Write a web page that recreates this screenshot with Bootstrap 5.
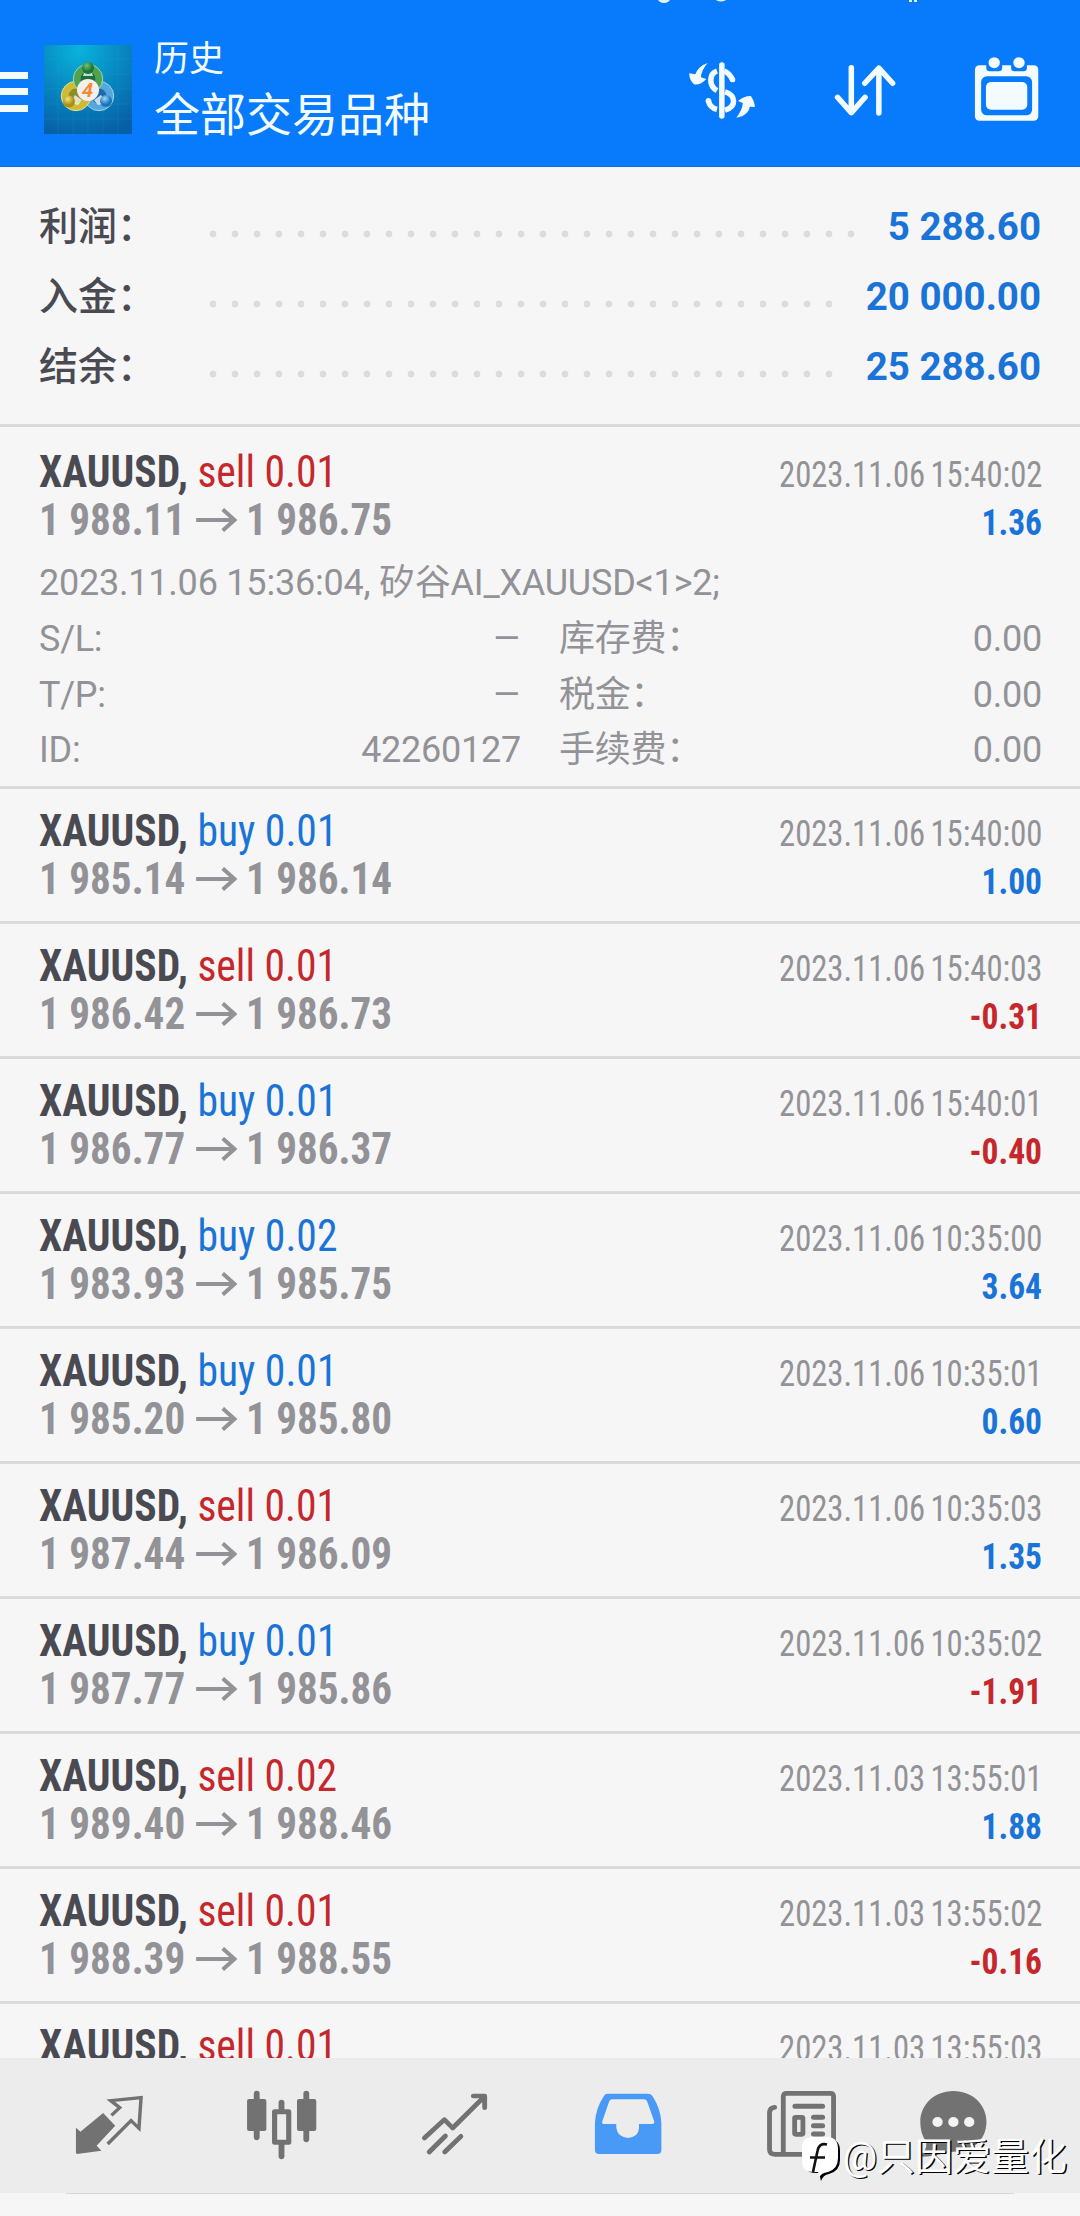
<!DOCTYPE html>
<html lang="zh-CN">
<head>
<meta charset="utf-8">
<meta name="viewport" content="width=device-width, initial-scale=1">
<title>历史</title>
<link href="https://cdn.jsdelivr.net/npm/bootstrap@5.3.0/dist/css/bootstrap.min.css" rel="stylesheet">
<style>
body{width:1080px;height:2216px;overflow:hidden;background:#f6f6f6;color:#929297;font-family:Roboto,"Noto Sans CJK SC",sans-serif;font-size:36px;line-height:1}
svg{display:block;flex:none}
.appbar{height:167px;background:#077bfb;color:#f4fbff;padding-right:33px;border-bottom:1px solid #0a6fd8}
.burger{width:28px;margin:17px 16px 0 0}
.burger i{display:block;height:7px;background:#f4fbff;margin-bottom:9.5px}
.burger i:last-child{margin-bottom:0}
.logo{margin-top:12px}
.heading{margin-left:22px;padding-top:38px}
.heading div{white-space:nowrap}
.h-small{font-size:35px;line-height:44px}
.h-big{font-size:46px;line-height:62px;margin-top:2px}
.tools{gap:62.5px;padding-top:7px}
.totals{height:260px;padding:25px 39px 0;border-bottom:3px solid #dadada}
.total{height:70px;font-size:39px;font-weight:500;color:#4a4a52}
.total b{font-size:38.500px;font-weight:700;color:#1a74d8}
.total-label{width:169.5px}
.dots{height:8px;margin-top:14px;background:radial-gradient(circle at 4px 4px,#dcdcdc 3px,transparent 3.8px) 0 0/22px 8px}
.d30{width:646px}.d29{width:624px}
.trade{height:135px;padding:17.500px 38px 0 39px;border-bottom:3px solid #dadada}
.trade.open{height:362px;padding-top:21px}
.line{height:48px;white-space:nowrap;line-height:48px}
.cl,.cr{font-family:"Roboto Condensed",Roboto,sans-serif;font-stretch:75%;transform:scaleX(.945);transform-origin:left;font-size:44px}
.cl.px{transform:scaleX(.935)}
.cr{transform:scaleX(.907);transform-origin:right;font-size:36px;word-spacing:-2.400px}
.cr.pl{font-weight:700;transform:scaleX(.93)}
.sym{font-weight:700;color:#4a4a52}
.px{font-weight:700}
.up{color:#1a74d8}.down{color:#c4282c}
.px svg{margin:0 9px 0 12px}
.note{margin-top:14px;line-height:50px;height:50px;white-space:nowrap;letter-spacing:-.22px}
.info{line-height:55.5px;height:55.5px;position:relative;top:4px;letter-spacing:-.25px}
.info>div:first-child{width:482px;margin-right:38px}
.dash{transform:scaleX(1.25);transform-origin:right}
.tabs{position:absolute;left:0;top:2058px;width:1080px;height:135px;background:#ececec;padding:28px 0 0 22px}
.tabs>a{width:173px}.tabs>a:last-of-type{width:131px}
.tabs svg{margin:0 auto}
.tabs::after{content:"";position:absolute;left:66px;width:948px;bottom:-1px;height:1px;background:#d6d6d6;z-index:1}
.foot{position:absolute;left:0;right:0;top:2193px;height:23px;background:#f6f6f6}
.wm{position:absolute;left:801px;top:2132px;color:#fff;font-size:38px;line-height:40px;white-space:nowrap;text-shadow:1.3px 1.3px .6px #000;gap:1px}
.wm svg{margin-top:3px}
.bits{position:absolute;left:655px;top:0}
</style>
<script src="https://cdn.jsdelivr.net/npm/bootstrap@5.3.0/dist/js/bootstrap.bundle.min.js"></script>
</head>
<body class="position-relative">
<svg width="0" height="0" class="position-absolute"><defs>
<symbol id="arr" viewBox="0 0 44 24"><path d="M0 12H40M28.500 1.500L41 12L28.500 22.500" fill="none" stroke="#929297" stroke-width="4.200"/></symbol>
</defs></svg>

<header class="appbar d-flex align-items-center">
  <div class="burger"><i></i><i></i><i></i></div>
  <svg class="logo" width="88" height="89" viewBox="0 0 88 89">
    <defs>
      <radialGradient id="sky" cx=".4" cy=".05" r="1"><stop offset="0" stop-color="#08b4dc"/><stop offset=".5" stop-color="#0787c0"/><stop offset="1" stop-color="#075fa6"/></radialGradient>
      <radialGradient id="gg" cx=".4" cy=".3"><stop offset="0" stop-color="#7cc076"/><stop offset="1" stop-color="#16763a"/></radialGradient>
      <radialGradient id="gy" cx=".4" cy=".3"><stop offset="0" stop-color="#f2e582"/><stop offset="1" stop-color="#a98e12"/></radialGradient>
      <radialGradient id="gb" cx=".4" cy=".3"><stop offset="0" stop-color="#9ad8f5"/><stop offset="1" stop-color="#1b74b8"/></radialGradient>
    </defs>
    <rect width="88" height="89" fill="url(#sky)"/>
    <path d="M14 0V89M29 0V89M44 0V89M59 0V89M74 0V89M0 14H88M0 29H88M0 44H88M0 59H88M0 74H88" stroke="#39a6d8" stroke-opacity=".16" fill="none"/>
    <circle cx="55" cy="51" r="11" fill="#1c6cae" stroke="#55a8de" stroke-width="7"/>
    <circle cx="55" cy="51" r="14.700" fill="none" stroke="#a5d8f0" stroke-width="1"/>
    <circle cx="32" cy="51" r="11" fill="#8f8a2a" stroke="#cdbb38" stroke-width="7"/>
    <circle cx="32" cy="51" r="14.700" fill="none" stroke="#ece690" stroke-width="1"/>
    <circle cx="44" cy="34" r="11" fill="#1d6f3c" stroke="#4fa351" stroke-width="7"/>
    <circle cx="44" cy="34" r="14.700" fill="none" stroke="#a5d99a" stroke-width="1"/>
    <path d="M39 31L49 31L47 25H41ZM31 50L26 58L34 60L38 55ZM57 50L62 58L54 60L50 55Z" fill="#fff" fill-opacity=".75"/>
    <circle cx="44" cy="23" r="6" fill="url(#gg)"/><circle cx="25" cy="56.500" r="6" fill="url(#gy)"/><circle cx="62" cy="56" r="6" fill="url(#gb)"/>
    <circle cx="44" cy="45" r="11" fill="#f4efec"/>
    <text x="43.500" y="52" text-anchor="middle" font-size="20" font-weight="700" font-style="italic" fill="#f08c35" font-family="Roboto">4</text>
  </svg>
  <div class="heading align-self-start"><div class="h-small">历史</div><div class="h-big">全部交易品种</div></div>
  <div class="tools d-flex ms-auto">
    <svg width="80" height="80" viewBox="412.300 140 232.300 240" preserveAspectRatio="none" fill="#f4fbff">
      <path d="M487 188Q472 192 462 203Q455 211 451 222L433 219Q434 240 447 252Q465 256 483 236L467 231Q469 208 487 188Z"/>
      <path d="M570 352Q588 350 600 338Q609 329 609 319L624 320Q622 300 612 287Q594 286 575 302L589 308Q587 330 570 352Z"/>
      <path d="M528 194V347" stroke="#f4fbff" stroke-width="16" stroke-linecap="round"/>
      <path d="M514 212Q496 218 496 240Q496 261 514 271M535 212Q549 217 559 238M489 301Q493 322 514 327M537 274Q562 282 562 303Q562 322 537 330" fill="none" stroke="#f4fbff" stroke-width="16"/>
      <circle cx="559" cy="238" r="8"/><circle cx="489" cy="301" r="8"/>
    </svg>
    <svg width="80" height="80" viewBox="827.600 140 232.300 240" preserveAspectRatio="none" fill="none" stroke="#f4fbff" stroke-width="16" stroke-linecap="round" stroke-linejoin="round"><path d="M904 202V336M864 291L904 337L944 291M984 338V204M943 249L984 203L1024 249"/></svg>
    <svg width="80" height="80" viewBox="1240 140 232.300 240" preserveAspectRatio="none" fill="#f4fbff">
      <rect x="1263" y="195" width="184" height="166" rx="13"/>
      <path d="M1296 190H1342V203Q1342 213 1332 213H1306Q1296 213 1296 203ZM1368 190H1414V203Q1414 213 1404 213H1378Q1368 213 1368 203Z" fill="#077bfb"/>
      <circle cx="1319" cy="187" r="16.500"/><circle cx="1391" cy="187" r="16.500"/>
      <rect x="1281" y="228" width="148" height="117" rx="17" fill="#077bfb"/>
      <rect x="1295" y="245" width="120" height="83" rx="15"/>
    </svg>
  </div>
</header>
<svg class="bits" width="270" height="3" viewBox="0 0 270 3" fill="#dff1ff"><ellipse cx="9" cy="-1" rx="6" ry="4"/><ellipse cx="66" cy="-2" rx="6" ry="3.500"/><path d="M254 0h3v2h-3zM259 0h3v2h-3z"/></svg>

<section class="totals">
  <div class="total d-flex align-items-center"><span class="total-label">利润：</span><span class="dots d30"></span><b class="ms-auto">5 288.60</b></div>
  <div class="total d-flex align-items-center"><span class="total-label">入金：</span><span class="dots d29"></span><b class="ms-auto">20 000.00</b></div>
  <div class="total d-flex align-items-center"><span class="total-label">结余：</span><span class="dots d29"></span><b class="ms-auto">25 288.60</b></div>
</section>

<main>
<article class="trade open">
  <div class="line d-flex justify-content-between align-items-baseline"><div class="cl"><span class="sym">XAUUSD,</span> <span class="down">sell 0.01</span></div><div class="cr">2023.11.06 15:40:02</div></div>
  <div class="line d-flex justify-content-between align-items-baseline"><div class="cl px d-flex align-items-center">1 988.11<svg width="44" height="24"><use href="#arr"/></svg>1 986.75</div><div class="cr pl up">1.36</div></div>
  <div class="note">2023.11.06 15:36:04, 矽谷AI_XAUUSD&lt;1&gt;2;</div>
  <div class="info d-flex"><div class="d-flex justify-content-between"><span>S/L:</span><span class="dash">–</span></div><div class="d-flex justify-content-between flex-fill"><span>库存费：</span><span>0.00</span></div></div>
  <div class="info d-flex"><div class="d-flex justify-content-between"><span>T/P:</span><span class="dash">–</span></div><div class="d-flex justify-content-between flex-fill"><span>税金：</span><span>0.00</span></div></div>
  <div class="info d-flex"><div class="d-flex justify-content-between"><span>ID:</span><span>42260127</span></div><div class="d-flex justify-content-between flex-fill"><span>手续费：</span><span>0.00</span></div></div>
</article>
<article class="trade">
  <div class="line d-flex justify-content-between align-items-baseline"><div class="cl"><span class="sym">XAUUSD,</span> <span class="up">buy 0.01</span></div><div class="cr">2023.11.06 15:40:00</div></div>
  <div class="line d-flex justify-content-between align-items-baseline"><div class="cl px d-flex align-items-center">1 985.14<svg width="44" height="24"><use href="#arr"/></svg>1 986.14</div><div class="cr pl up">1.00</div></div>
</article>
<article class="trade">
  <div class="line d-flex justify-content-between align-items-baseline"><div class="cl"><span class="sym">XAUUSD,</span> <span class="down">sell 0.01</span></div><div class="cr">2023.11.06 15:40:03</div></div>
  <div class="line d-flex justify-content-between align-items-baseline"><div class="cl px d-flex align-items-center">1 986.42<svg width="44" height="24"><use href="#arr"/></svg>1 986.73</div><div class="cr pl down">-0.31</div></div>
</article>
<article class="trade">
  <div class="line d-flex justify-content-between align-items-baseline"><div class="cl"><span class="sym">XAUUSD,</span> <span class="up">buy 0.01</span></div><div class="cr">2023.11.06 15:40:01</div></div>
  <div class="line d-flex justify-content-between align-items-baseline"><div class="cl px d-flex align-items-center">1 986.77<svg width="44" height="24"><use href="#arr"/></svg>1 986.37</div><div class="cr pl down">-0.40</div></div>
</article>
<article class="trade">
  <div class="line d-flex justify-content-between align-items-baseline"><div class="cl"><span class="sym">XAUUSD,</span> <span class="up">buy 0.02</span></div><div class="cr">2023.11.06 10:35:00</div></div>
  <div class="line d-flex justify-content-between align-items-baseline"><div class="cl px d-flex align-items-center">1 983.93<svg width="44" height="24"><use href="#arr"/></svg>1 985.75</div><div class="cr pl up">3.64</div></div>
</article>
<article class="trade">
  <div class="line d-flex justify-content-between align-items-baseline"><div class="cl"><span class="sym">XAUUSD,</span> <span class="up">buy 0.01</span></div><div class="cr">2023.11.06 10:35:01</div></div>
  <div class="line d-flex justify-content-between align-items-baseline"><div class="cl px d-flex align-items-center">1 985.20<svg width="44" height="24"><use href="#arr"/></svg>1 985.80</div><div class="cr pl up">0.60</div></div>
</article>
<article class="trade">
  <div class="line d-flex justify-content-between align-items-baseline"><div class="cl"><span class="sym">XAUUSD,</span> <span class="down">sell 0.01</span></div><div class="cr">2023.11.06 10:35:03</div></div>
  <div class="line d-flex justify-content-between align-items-baseline"><div class="cl px d-flex align-items-center">1 987.44<svg width="44" height="24"><use href="#arr"/></svg>1 986.09</div><div class="cr pl up">1.35</div></div>
</article>
<article class="trade">
  <div class="line d-flex justify-content-between align-items-baseline"><div class="cl"><span class="sym">XAUUSD,</span> <span class="up">buy 0.01</span></div><div class="cr">2023.11.06 10:35:02</div></div>
  <div class="line d-flex justify-content-between align-items-baseline"><div class="cl px d-flex align-items-center">1 987.77<svg width="44" height="24"><use href="#arr"/></svg>1 985.86</div><div class="cr pl down">-1.91</div></div>
</article>
<article class="trade">
  <div class="line d-flex justify-content-between align-items-baseline"><div class="cl"><span class="sym">XAUUSD,</span> <span class="down">sell 0.02</span></div><div class="cr">2023.11.03 13:55:01</div></div>
  <div class="line d-flex justify-content-between align-items-baseline"><div class="cl px d-flex align-items-center">1 989.40<svg width="44" height="24"><use href="#arr"/></svg>1 988.46</div><div class="cr pl up">1.88</div></div>
</article>
<article class="trade">
  <div class="line d-flex justify-content-between align-items-baseline"><div class="cl"><span class="sym">XAUUSD,</span> <span class="down">sell 0.01</span></div><div class="cr">2023.11.03 13:55:02</div></div>
  <div class="line d-flex justify-content-between align-items-baseline"><div class="cl px d-flex align-items-center">1 988.39<svg width="44" height="24"><use href="#arr"/></svg>1 988.55</div><div class="cr pl down">-0.16</div></div>
</article>
<article class="trade">
  <div class="line d-flex justify-content-between align-items-baseline"><div class="cl"><span class="sym">XAUUSD,</span> <span class="down">sell 0.01</span></div><div class="cr">2023.11.03 13:55:03</div></div>
</article>
</main>

<nav class="tabs d-flex">
  <a><svg width="80" height="80" viewBox="198.800 318 232.300 240" preserveAspectRatio="none" fill="#727272">
    <path d="M298 399L333 437L279 497L293 512L222 522L219 519V443L232 455Z"/>
    <path d="M322 406L346 383L320 362L408 353L402 445L379 422L311 492" fill="none" stroke="#727272" stroke-width="10"/></svg></a>
  <a><svg width="80" height="80" viewBox="701.300 318 232.300 240" preserveAspectRatio="none" fill="#727272">
    <rect x="716" y="357" width="56" height="96" rx="6"/><rect x="861" y="357" width="56" height="96" rx="6"/>
    <path d="M744 341V472M888 341V478M816 368V392M816 490V529" stroke="#727272" stroke-width="17" stroke-linecap="round"/>
    <rect x="796" y="395" width="41" height="92" fill="none" stroke="#727272" stroke-width="15" stroke-linejoin="round"/></svg></a>
  <a><svg width="80" height="80" viewBox="1203.700 318 232.300 240" preserveAspectRatio="none" fill="none" stroke="#727272" stroke-width="14" stroke-linecap="round" stroke-linejoin="round"><path d="M1231 474L1289 419L1313 444L1405 350M1373 348H1406V383M1292 468L1245 516M1337 469L1290 516"/></svg></a>
  <a><svg width="80" height="80" viewBox="137.900 318 232.300 240" preserveAspectRatio="none"><path fill-rule="evenodd" fill="#489af6" d="M195 341H312Q320 341 325 348Q350 388 351 430V510Q351 522 339 522H170Q158 522 158 510V430Q159 388 184 348Q188 341 195 341ZM208 358Q202 358 199 365L179 425Q178 432 185 432H220V440Q221 457 232 466Q242 474 254 474Q266 474 276 466Q286 457 286 440V432H324Q332 432 330 424L310 365Q307 358 301 358Z"/></svg></a>
  <a><svg width="80" height="80" viewBox="640.300 318 232.300 240" preserveAspectRatio="none" fill="none" stroke="#727272" stroke-width="14" stroke-linecap="round">
    <path d="M705 520V350Q705 340 715 340H842Q851 340 851 350V510Q851 523 840 523H680Q665 523 665 508V400Q665 383 680 382"/>
    <path d="M739 379H819M793 412H819M793 437H819M793 462H819" stroke-width="15"/><rect x="738" y="412" width="24" height="51" rx="3"/></svg></a>
  <a><svg width="80" height="80" viewBox="1081.700 318 232.300 240" preserveAspectRatio="none" fill="#727272"><path d="M1199 333C1255 333 1295 375 1295 425C1295 480 1255 515 1199 515C1175 515 1150 530 1106 530Q1104 524 1112 516Q1122 506 1120 485C1108 468 1103 447 1103 425C1103 375 1143 333 1199 333Z"/><g fill="#f4f4f4"><circle cx="1153" cy="426" r="15"/><circle cx="1199" cy="426" r="15"/><circle cx="1245" cy="426" r="15"/></g></svg></a>
</nav>
<div class="foot"></div>
<div class="wm d-flex align-items-center">
  <svg width="41" height="46" viewBox="0 0 41 46"><path d="M14 4H28Q39 4 39 16V25Q39 36 28 39Q22 40 20 46L18 38H14Q4 38 4 27V14Q4 4 14 4Z" fill="#000"/><path d="M12 2H26Q37 2 37 14V23Q37 34 27 37Q20 38 18.500 42L17 37H12Q1 37 1 26V13Q1 2 12 2Z" fill="#fff"/><path d="M26 9.500Q18 7.500 16.500 16L12 37M9 22.500H24" fill="none" stroke="#111" stroke-width="2.600"/></svg>
  <span>@只因爱量化</span>
</div>
</body>
</html>
